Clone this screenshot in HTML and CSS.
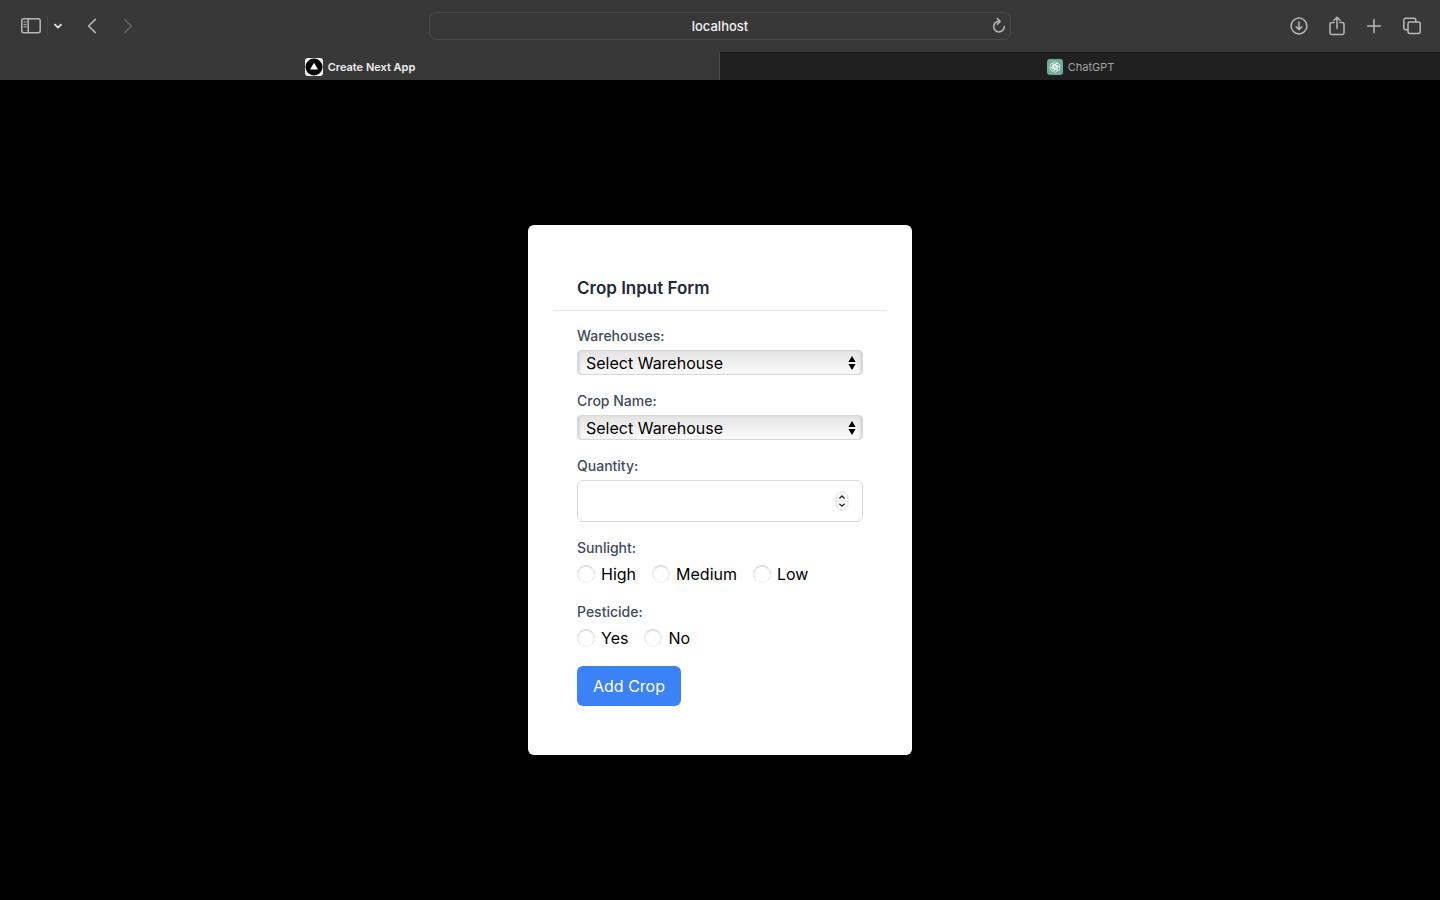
FILE: index.html
```html
<!DOCTYPE html>
<html lang="en">
<head>
<meta charset="utf-8">
<meta name="viewport" content="width=device-width, initial-scale=1">
<title>Create Next App</title>
<link rel="stylesheet" href="styles.css">
</head>
<body>
<header class="browser">
  <div class="toolbar">
    <div class="tools">
      <button class="tool" aria-label="Show sidebar">
        <svg width="22" height="18" viewBox="0 0 22 18"><rect x="1.8" y="1.8" width="18.4" height="14" rx="2"/><path d="M8.2 2v13.6"/><path class="thin" d="M3.9 5h2.4M3.9 7.4h2.4M3.9 9.8h2.4"/></svg>
      </button>
      <button class="tool tool-menu" aria-label="Tab groups">
        <svg width="10" height="10" viewBox="0 0 10 10"><path class="bold" d="M2 3.6 5 6.6 8 3.6"/></svg>
      </button>
      <button class="tool tool-back" aria-label="Back">
        <svg width="12" height="18" viewBox="0 0 12 18"><path d="M9.4 2.4 2.6 9l6.800 6.600"/></svg>
      </button>
      <button class="tool tool-forward" aria-label="Forward" disabled>
        <svg width="12" height="18" viewBox="0 0 12 18"><path d="M2.600 2.400 9.400 9l-6.800 6.600"/></svg>
      </button>
    </div>
    <div class="address">
      <input class="address-input" type="text" aria-label="Address" value="localhost">
      <button class="reload" aria-label="Reload">
        <svg width="16" height="18" viewBox="0 0 16 18"><path d="M8.300 4.300A5.300 5.300 0 1 0 13.300 9.600"/><path d="M6.300 1.600 9.100 4.400 6.300 7.200"/></svg>
      </button>
    </div>
    <div class="tools tools-right">
      <button class="tool" aria-label="Downloads">
        <svg width="20" height="20" viewBox="0 0 20 20"><circle cx="10" cy="10" r="7.900"/><path d="M10 6v7.400M7.200 10.800 10 13.600l2.800-2.800"/></svg>
      </button>
      <button class="tool" aria-label="Share">
        <svg width="18" height="22" viewBox="0 0 18 22"><path d="M6 7.600H3.800a1.800 1.800 0 0 0-1.800 1.800v8.400a1.800 1.800 0 0 0 1.800 1.800h10.400a1.800 1.800 0 0 0 1.800-1.800V9.400a1.800 1.800 0 0 0-1.800-1.800H12M9 13.400V2.400M6 5.200 9 2.200l3 3"/></svg>
      </button>
      <button class="tool" aria-label="New tab">
        <svg width="18" height="18" viewBox="0 0 18 18"><path d="M9 2.600v12.800M2.600 9h12.800"/></svg>
      </button>
      <button class="tool" aria-label="Tab overview">
        <svg width="20" height="20" viewBox="0 0 20 20"><rect x="6" y="6" width="12.200" height="11.600" rx="2"/><path d="M5.800 13.800H3.800a2 2 0 0 1-2-2V4.200a2 2 0 0 1 2-2h8a2 2 0 0 1 2 2v1.600"/></svg>
      </button>
    </div>
  </div>
  <nav class="tabs" aria-label="Tabs">
    <a class="tab tab-active" href="#">
      <svg width="20" height="20" viewBox="0 0 20 20"><rect x="1" y="1" width="18" height="18" rx="3" fill="#f2f2f2"/><circle cx="10" cy="10" r="8.500" fill="#000"/><path d="M10 5.800 14 12.600H6z" fill="#fff"/></svg>
      <span>Create Next App</span>
    </a>
    <a class="tab" href="#">
      <svg width="18" height="18" viewBox="0 0 18 18"><rect x="1" y="1" width="16" height="16" rx="3" fill="#74aa9c"/><g fill="none" stroke="#e4f3ed" stroke-width="0.800"><path id="petal" d="M6.600 10.400V6.300a2.500 2.500 0 0 1 4.700-1.200L7.800 7.100v3.200L9 11"/><use href="#petal" transform="rotate(60 9 9)"/><use href="#petal" transform="rotate(120 9 9)"/><use href="#petal" transform="rotate(180 9 9)"/><use href="#petal" transform="rotate(240 9 9)"/><use href="#petal" transform="rotate(300 9 9)"/></g></svg>
      <span>ChatGPT</span>
    </a>
  </nav>
</header>
<main class="page">
  <form class="card">
    <h1 class="title">Crop Input Form</h1>
    <div class="fields">
      <div class="field">
        <label class="label" for="warehouse">Warehouses:</label>
        <div class="select-wrap">
          <select class="select" id="warehouse"><option>Select Warehouse</option></select>
          <svg class="arrows" width="8" height="16" viewBox="0 0 8 16"><path d="M4 1 7.600 7H.4zM4 15 .4 9h7.200z"/></svg>
        </div>
      </div>
      <div class="field">
        <label class="label" for="crop">Crop Name:</label>
        <div class="select-wrap">
          <select class="select" id="crop"><option>Select Warehouse</option></select>
          <svg class="arrows" width="8" height="16" viewBox="0 0 8 16"><path d="M4 1 7.600 7H.4zM4 15 .4 9h7.200z"/></svg>
        </div>
      </div>
      <div class="field">
        <label class="label" for="quantity">Quantity:</label>
        <div class="number-wrap">
          <input class="number" id="quantity" type="number">
          <svg class="stepper" width="14" height="20" viewBox="0 0 14 20"><rect x="1" y="1" width="12" height="18" rx="6" fill="#fff" stroke="#dcdcdc"/><path d="M1 10h12" stroke="#dcdcdc"/><path d="M4.400 7.400 7 5l2.600 2.400M4.400 12.800 7 15.200l2.600-2.400" fill="none" stroke="#222" stroke-width="1.300"/></svg>
        </div>
      </div>
      <fieldset class="field">
        <legend class="label">Sunlight:</legend>
        <div class="options">
          <label class="option"><input class="radio" type="radio" name="sunlight">High</label>
          <label class="option"><input class="radio" type="radio" name="sunlight">Medium</label>
          <label class="option"><input class="radio" type="radio" name="sunlight">Low</label>
        </div>
      </fieldset>
      <fieldset class="field">
        <legend class="label">Pesticide:</legend>
        <div class="options">
          <label class="option"><input class="radio" type="radio" name="pesticide">Yes</label>
          <label class="option"><input class="radio" type="radio" name="pesticide">No</label>
        </div>
      </fieldset>
      <button class="submit" type="button">Add Crop</button>
    </div>
  </form>
</main>
</body>
</html>
```
FILE: styles.css
```css
* {
  box-sizing: border-box;
}

body {
  margin: 0;
  min-height: 100vh;
  display: flex;
  flex-direction: column;
  background: #000;
  font-family: Inter, "Liberation Sans", sans-serif;
  font-size: 16px;
  line-height: 24px;
}

button,
input,
select {
  font: inherit;
  margin: 0;
}

svg {
  display: block;
  flex: none;
}

/* Browser chrome */
.browser {
  background: #383838;
}

.toolbar {
  display: grid;
  grid-template-columns: 1fr minmax(0, 584px) 1fr;
  align-items: center;
  height: 52px;
}

.tools {
  display: flex;
  align-items: center;
  padding: 0 20px;
}

.tools-right {
  justify-content: flex-end;
  gap: 19px;
  padding: 0 18px;
}

.tool,
.reload {
  padding: 0;
  border: 0;
  background: none;
}

.tool svg,
.reload svg {
  fill: none;
  stroke: #b8b8b8;
  stroke-width: 1.5;
  stroke-linecap: round;
  stroke-linejoin: round;
}

.tool .thin {
  stroke-width: 1;
}

.tool .bold {
  stroke: #e4e4e4;
  stroke-width: 1.8;
}

.tool-menu {
  margin-left: 5px;
  padding: 5px 0 5px 5px;
  border-left: 1px solid #444;
}

.tool-back {
  margin-left: 23px;
}

.tool-forward {
  margin-left: 24px;
}

.tool-forward svg {
  stroke: #636363;
}

.address {
  position: relative;
  padding: 0 1px;
}

.address-input {
  display: block;
  width: 100%;
  height: 28px;
  padding: 0 32px;
  border: 1px solid #4c4c4c;
  border-radius: 7px;
  background: #383838;
  color: #f0f0f0;
  font-size: 13px;
  font-weight: 500;
  text-align: center;
}

.reload {
  position: absolute;
  top: 5px;
  right: 5px;
}

.tabs {
  display: grid;
  grid-template-columns: 1fr 1fr;
  height: 28px;
}

.tab {
  display: flex;
  align-items: center;
  justify-content: center;
  gap: 4px;
  background: #202020;
  border-top: 1px solid #161616;
  color: #a3a3a3;
  font-size: 11px;
  text-decoration: none;
}

.tab-active {
  background: #383838;
  border-top-color: #383838;
  border-right: 1px solid #4a4a4a;
  color: #efefef;
  font-weight: 600;
}

/* Form */
.page {
  flex: 1;
  display: flex;
  align-items: center;
  justify-content: center;
}

.card {
  width: 100%;
  max-width: 384px;
  padding: 49px 25px;
  border-radius: 6px;
  background: #fff;
}

.title {
  margin: 0 0 15px;
  padding: 0 24px 8px;
  border-bottom: 1px solid #e5e7eb;
  color: #1f2937;
  font-size: 17px;
  font-weight: 600;
  line-height: 28px;
}

.fields {
  display: flex;
  flex-direction: column;
  align-items: flex-start;
  gap: 16px;
  padding: 0 24px;
}

.field {
  width: 100%;
  min-width: 0;
  margin: 0;
  padding: 0;
  border: 0;
}

.label {
  display: block;
  margin-bottom: 4px;
  padding: 0;
  color: #414b5a;
  font-size: 14px;
  font-weight: 500;
  line-height: 20px;
}

.select-wrap,
.number-wrap {
  position: relative;
}

.select {
  display: block;
  width: 100%;
  height: 25px;
  padding: 0 24px 0 8px;
  border: 1px solid #d6d8dc;
  border-radius: 4px;
  appearance: none;
  background: linear-gradient(#e4e4e4, #fbfbfb);
  box-shadow: inset 3px 0 3px -2px #c4c7cd, inset -3px 0 3px -2px #c4c7cd;
  color: #000;
}

.arrows {
  position: absolute;
  top: 5px;
  right: 7px;
  pointer-events: none;
}

.number {
  display: block;
  width: 100%;
  height: 42px;
  padding: 8px 32px 8px 12px;
  border: 1px solid #d9dbdf;
  border-radius: 6px;
  appearance: textfield;
  background: #fff;
}

.stepper {
  position: absolute;
  top: 11px;
  right: 14px;
  pointer-events: none;
}

.options {
  display: flex;
  gap: 16px;
}

.option {
  display: flex;
  align-items: center;
  gap: 6px;
  color: #000;
}

.radio {
  width: 18px;
  height: 18px;
  border: 1px solid #e2e2e2;
  border-top-color: #d2d2d2;
  border-bottom-color: #efefef;
  border-radius: 50%;
  appearance: none;
  background: #fff;
  box-shadow: inset 0 1px 1px #e2e2e2;
}

.radio:checked {
  border: 5px solid #3b82f6;
}

.submit {
  padding: 8px 16px;
  border: 0;
  border-radius: 6px;
  background: #3b82f6;
  color: #fff;
}
```
